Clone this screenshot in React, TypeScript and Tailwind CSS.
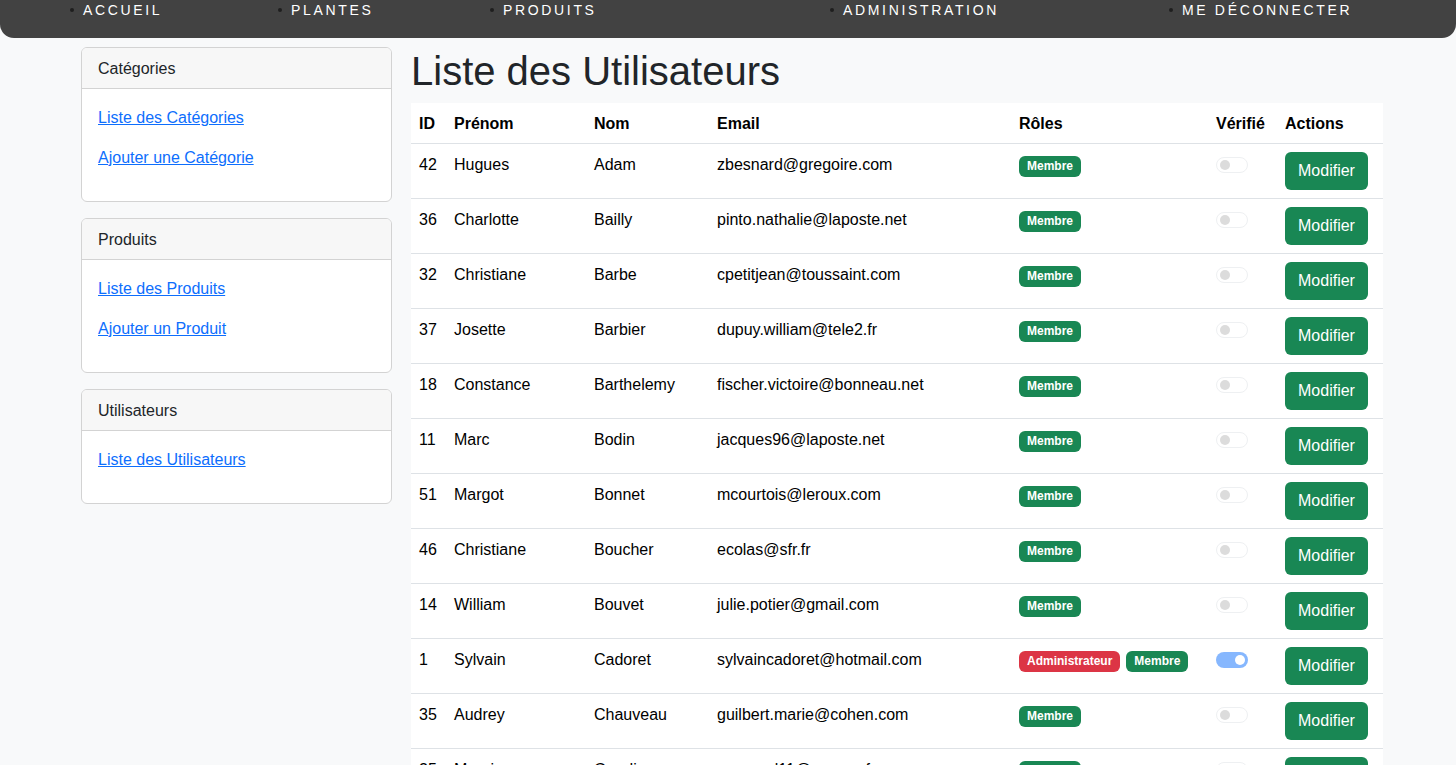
import React from 'react';

type User = {
  id: number;
  first: string;
  last: string;
  email: string;
  admin?: boolean;
};

const users: User[] = [
  { id: 42, first: 'Hugues', last: 'Adam', email: 'zbesnard@gregoire.com' },
  { id: 36, first: 'Charlotte', last: 'Bailly', email: 'pinto.nathalie@laposte.net' },
  { id: 32, first: 'Christiane', last: 'Barbe', email: 'cpetitjean@toussaint.com' },
  { id: 37, first: 'Josette', last: 'Barbier', email: 'dupuy.william@tele2.fr' },
  { id: 18, first: 'Constance', last: 'Barthelemy', email: 'fischer.victoire@bonneau.net' },
  { id: 11, first: 'Marc', last: 'Bodin', email: 'jacques96@laposte.net' },
  { id: 51, first: 'Margot', last: 'Bonnet', email: 'mcourtois@leroux.com' },
  { id: 46, first: 'Christiane', last: 'Boucher', email: 'ecolas@sfr.fr' },
  { id: 14, first: 'William', last: 'Bouvet', email: 'julie.potier@gmail.com' },
  { id: 1, first: 'Sylvain', last: 'Cadoret', email: 'sylvaincadoret@hotmail.com', admin: true },
  { id: 35, first: 'Audrey', last: 'Chauveau', email: 'guilbert.marie@cohen.com' },
  { id: 25, first: 'Maurice', last: 'Gaudin', email: 'mmarcel11@orange.fr' },
];

const navItems = [
  { label: 'Accueil', w: 'w-[208px]' },
  { label: 'Plantes', w: 'w-[212px]' },
  { label: 'Produits', w: 'w-[340px]' },
  { label: 'Administration', w: 'w-[339px]' },
  { label: 'Me déconnecter', w: 'w-[200px]' },
];

const sections = [
  { title: 'Catégories', links: ['Liste des Catégories', 'Ajouter une Catégorie'] },
  { title: 'Produits', links: ['Liste des Produits', 'Ajouter un Produit'] },
  { title: 'Utilisateurs', links: ['Liste des Utilisateurs'] },
];

function Badge({ children, red }: { children: React.ReactNode; red?: boolean }) {
  return (
    <span
      className={`inline-block rounded-[6px] px-[8px] pt-[4px] pb-[5px] text-[12px] font-bold leading-[12px] text-white align-baseline ${
        red ? 'bg-[#dc3545]' : 'bg-[#198754]'
      }`}
    >
      {children}
    </span>
  );
}

function Switch({ on }: { on?: boolean }) {
  return on ? (
    <span className="mt-[5px] flex h-[16px] w-[32px] items-center justify-end rounded-full bg-[#86b7fe] pr-[3px]">
      <span className="h-[10px] w-[10px] rounded-full bg-white" />
    </span>
  ) : (
    <span className="mt-[5px] flex h-[16px] w-[32px] items-center rounded-full border border-[#eef0f2] bg-white pl-[3px]">
      <span className="h-[10px] w-[10px] rounded-full bg-[#dcdcdc]" />
    </span>
  );
}

export default function App() {
  return (
    <div className="min-h-screen bg-[#f8f9fa] font-['Liberation_Sans',Arial,sans-serif] text-[16px] text-[#212529]">
      {/* Top navigation */}
      <nav className="h-[38px] rounded-b-[14px] bg-[#424242]">
        <ul className="flex pl-[70px]">
          {navItems.map((item) => (
            <li key={item.label} className={`${item.w} flex h-[20px] items-center`}>
              <span className="mr-[9px] h-[4px] w-[4px] rounded-full bg-[#1e1e1e]" />
              <a className="text-[14px] uppercase tracking-[0.19em] text-white">{item.label}</a>
            </li>
          ))}
        </ul>
      </nav>

      <div className="flex gap-[19px] pl-[81px] pt-[9px]">
        {/* Sidebar */}
        <aside className="flex w-[311px] shrink-0 flex-col gap-[16px]">
          {sections.map((s) => (
            <div key={s.title} className="overflow-hidden rounded-[6px] border border-[#d3d3d3] bg-white">
              <div className="border-b border-[#d3d3d3] bg-[#f7f7f7] px-[16px] pt-[9px] pb-[7px] leading-[24px]">{s.title}</div>
              <div className="p-[16px] pt-[17px] pb-[15px]">
                {s.links.map((l) => (
                  <p key={l} className="mb-[16px] leading-[24px]">
                    <a href="#" className="text-[#0d6efd] underline">
                      {l}
                    </a>
                  </p>
                ))}
              </div>
            </div>
          ))}
        </aside>

        {/* Main */}
        <main className="w-[972px] shrink-0">
          <h1 className="mb-[8px] text-[40px] leading-[48px] text-[#212529]">Liste des Utilisateurs</h1>
          <table className="w-full border-collapse bg-white align-top text-black">
            <thead>
              <tr className="border-b border-[#dee2e6] text-left">
                <th className="w-[35px] px-[8px] pt-[9px] pb-[7px] leading-[24px] font-bold">ID</th>
                <th className="w-[140px] px-[8px] pt-[9px] pb-[7px] leading-[24px] font-bold">Prénom</th>
                <th className="w-[123px] px-[8px] pt-[9px] pb-[7px] leading-[24px] font-bold">Nom</th>
                <th className="w-[302px] px-[8px] pt-[9px] pb-[7px] leading-[24px] font-bold">Email</th>
                <th className="w-[197px] px-[8px] pt-[9px] pb-[7px] leading-[24px] font-bold">Rôles</th>
                <th className="w-[69px] px-[8px] pt-[9px] pb-[7px] leading-[24px] font-bold">Vérifié</th>
                <th className="px-[8px] pt-[9px] pb-[7px] leading-[24px] font-bold">Actions</th>
              </tr>
            </thead>
            <tbody>
              {users.map((u) => (
                <tr key={u.id} className="border-b border-[#dee2e6] align-top">
                  <td className="px-[8px] pt-[9px] leading-[24px]">{u.id}</td>
                  <td className="px-[8px] pt-[9px] leading-[24px]">{u.first}</td>
                  <td className="px-[8px] pt-[9px] leading-[24px]">{u.last}</td>
                  <td className="px-[8px] pt-[9px] leading-[24px]">{u.email}</td>
                  <td className="p-[8px] pt-[12px] leading-[24px]">
                    <div className="flex gap-[6px]">
                      {u.admin && <Badge red>Administrateur</Badge>}
                      <Badge>Membre</Badge>
                    </div>
                  </td>
                  <td className="p-[8px] leading-[24px]">
                    <Switch on={u.admin} />
                  </td>
                  <td className="p-[8px]">
                    <button className="h-[38px] rounded-[6px] bg-[#198754] px-[13px] text-[16px] leading-[24px] text-white">
                      Modifier
                    </button>
                  </td>
                </tr>
              ))}
            </tbody>
          </table>
        </main>
      </div>
    </div>
  );
}
